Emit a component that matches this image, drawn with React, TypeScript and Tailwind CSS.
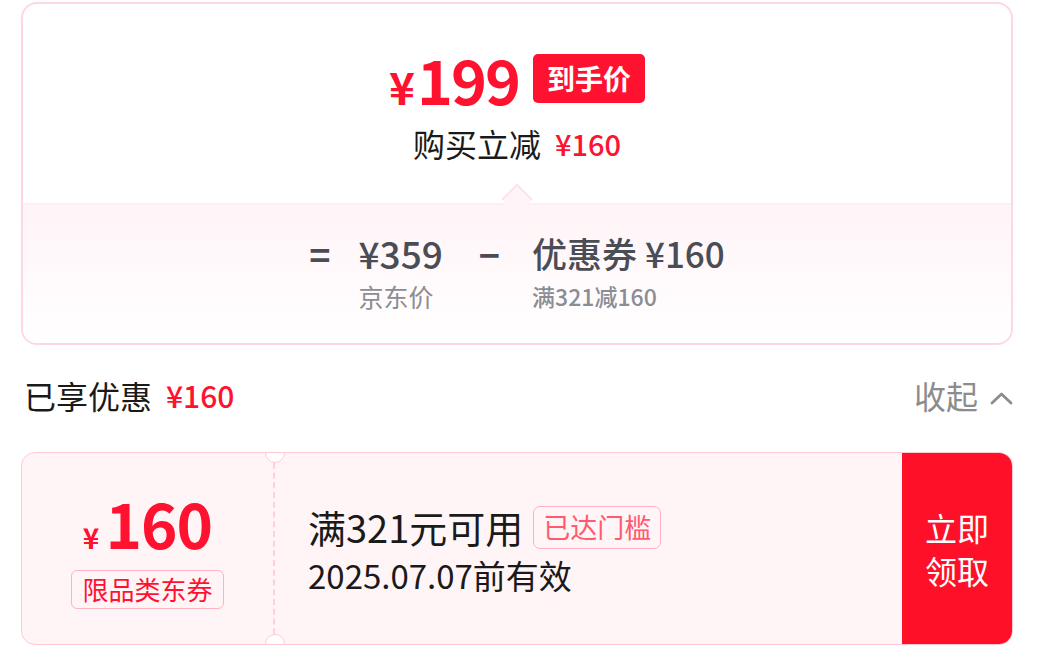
const font = { fontFamily: '"Noto Sans CJK SC", "Noto Sans", sans-serif' };

function PriceSummary() {
  return (
    <div className="ml-[21px] mt-[2px] w-[992px] h-[343px] rounded-[16px] border-2 border-[#ffd7e1] overflow-hidden flex flex-col">
      <div className="relative h-[199px] flex flex-col items-center pt-[44px]">
        <div className="flex items-center gap-[14px]">
          <div className="flex items-baseline text-[#ff1130] font-bold leading-none">
            <span className="text-[44px] mr-[2px]">¥</span>
            <span className="text-[61px] tracking-[-2px]">199</span>
          </div>
          <span className="h-[49px] px-[14px] rounded-[5px] bg-[#ff1130] text-white text-[28px] font-bold leading-[49px]">
            到手价
          </span>
        </div>
        <div className="mt-[18px] flex items-center gap-[14px] leading-none">
          <span className="text-[32px] text-[#1a1a1a]">购买立减</span>
          <span className="text-[29px] text-[#ff1130] font-medium">¥160</span>
        </div>
        <div className="absolute left-1/2 bottom-[-7px] -ml-[11px] w-[22px] h-[22px] rotate-45 bg-[#fff5f8] border-t-2 border-l-2 border-[#ffe1e8]" />
      </div>
      <div className="flex-1 border-t-2 border-[#ffeef2] bg-gradient-to-b from-[#fff4f7] to-white flex justify-center pt-[28px]">
        <div className="flex items-start text-[#4a4d55]">
          <span className="text-[36px] font-bold leading-[40px] mr-[28px]">=</span>
          <div className="flex flex-col mr-[36px]">
            <span className="text-[37px] font-medium leading-[40px]">¥359</span>
            <span className="mt-[8px] text-[25px] text-[#8a8d94] leading-[30px]">京东价</span>
          </div>
          <span className="text-[36px] font-bold leading-[40px] mr-[32px]">−</span>
          <div className="flex flex-col">
            <span className="text-[35px] font-medium leading-[40px]">优惠券 ¥160</span>
            <span className="mt-[8px] text-[23px] text-[#8a8d94] font-medium leading-[30px]">满321减160</span>
          </div>
        </div>
      </div>
    </div>
  );
}

function SavedRow() {
  return (
    <div className="ml-[24px] w-[989px] mt-[34px] mb-[41px] flex items-center justify-between leading-none">
      <div className="flex items-center gap-[14px]">
        <span className="text-[32px] text-[#1a1a1a]">已享优惠</span>
        <span className="text-[30px] text-[#ff1130] font-medium">¥160</span>
      </div>
      <div className="flex items-center gap-[12px] text-[#8c8c8c]">
        <span className="text-[32px]">收起</span>
        <svg width="23" height="14" viewBox="0 0 23 14" className="mt-[6px]">
          <polyline points="2,12 11.5,3 21,12" fill="none" stroke="currentColor" strokeWidth="2.8" strokeLinecap="round" strokeLinejoin="round" />
        </svg>
      </div>
    </div>
  );
}

function Coupon() {
  return (
    <div className="relative ml-[21px] w-[992px] h-[193px] flex rounded-[14px] border-[1.5px] border-[#ffc9d4] bg-[#fff5f7] overflow-hidden">
      <div className="w-[253px] flex flex-col items-center justify-center border-r-2 border-dashed border-[#ffd0da]">
        <div className="flex items-baseline text-[#ff1130] font-bold leading-none mt-[2px]">
          <span className="text-[28px] mr-[6px]">¥</span>
          <span className="text-[62px] tracking-[-1px]">160</span>
        </div>
        <span className="mt-[17px] h-[39px] px-[10px] rounded-[6px] border border-[#ffb3c1] text-[#ff1130] text-[26px] leading-[36px]">
          限品类东券
        </span>
      </div>
      <div className="flex-1 flex flex-col justify-center pl-[33px]">
        <div className="flex items-center gap-[10px]">
          <span className="text-[38px] text-[#1a1a1a] leading-none">满321元可用</span>
          <span className="h-[43px] px-[9px] rounded-[7px] border border-[#ffb3c1] text-[#ff5a6e] text-[27px] leading-[40px]">
            已达门槛
          </span>
        </div>
        <span className="mt-[10px] text-[33px] text-[#1a1a1a] leading-none">2025.07.07前有效</span>
      </div>
      <div className="w-[110px] bg-[#ff1029] flex flex-col items-center justify-center text-white text-[32px] leading-[43px]">
        <span>立即</span>
        <span>领取</span>
      </div>
      <div className="absolute left-[243px] top-[-10px] w-[20px] h-[20px] rounded-full bg-white border-[1.5px] border-[#ffc9d4]" />
      <div className="absolute left-[243px] bottom-[-10px] w-[20px] h-[20px] rounded-full bg-white border-[1.5px] border-[#ffc9d4]" />
    </div>
  );
}

export default function App() {
  return (
    <div className="w-[1042px] h-[653px] bg-white overflow-hidden" style={font}>
      <PriceSummary />
      <SavedRow />
      <Coupon />
    </div>
  );
}
